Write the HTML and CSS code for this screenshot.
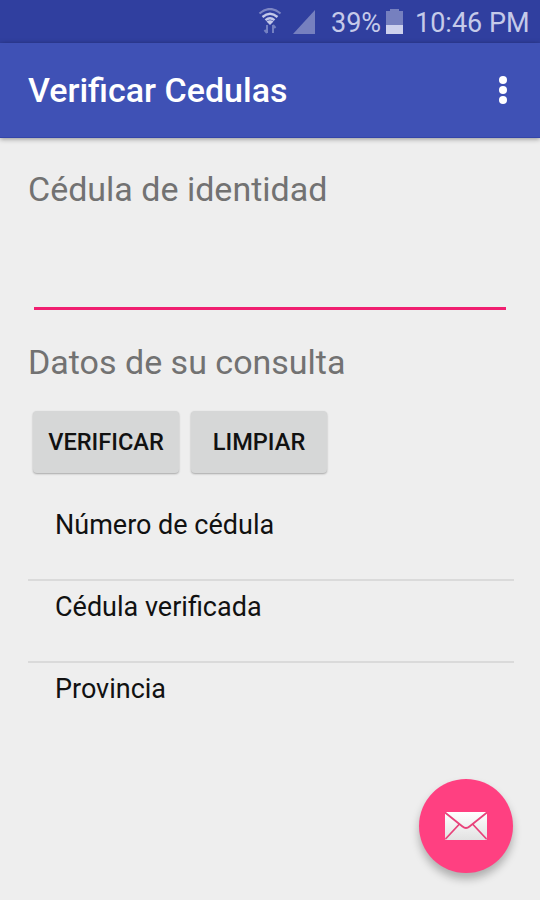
FILE: index.html
```
<!DOCTYPE html>
<html lang="es">
<head>
<meta charset="utf-8">
<title>Verificar Cedulas</title>
<link rel="stylesheet" href="styles.css">
</head>
<body>
<div class="screen">
  <div class="status">
    <svg class="wifi" width="24" height="26" viewBox="0 0 24 26" fill="none">
      <path d="M1.5 5.5Q12-3.5 22.5 5.5" stroke="#7d86c4" stroke-width="2.2"/>
      <path d="M4.5 9Q12 2.5 19.5 9M7.5 12.2Q12 8.4 16.500 12.2" stroke="#c3c8e9" stroke-width="2.4"/>
      <path d="M8.500 13.500Q12 11 15.500 13.500L12 17z" fill="#c3c8e9"/>
      <path d="M9 17v8M6.500 22l2.500 3M15 25v-8M17.500 20L15 17" stroke="#7480c2" stroke-width="2"/>
    </svg>
    <svg class="signal" width="22" height="24" viewBox="0 0 22 24"><path d="M0 24L22 0V24z" fill="#7680bf"/></svg>
    <span class="percent">39%</span>
    <svg class="battery" width="17" height="25" viewBox="0 0 17 25">
      <path d="M4 0h9v2h4v14H0V2h4z" fill="#7680bf"/>
      <path d="M0 16h17v9H0z" fill="#cdd1ed"/>
    </svg>
    <span class="clock">10:46 PM</span>
  </div>
  <header class="appbar">
    <h1 class="title">Verificar Cedulas</h1>
    <button class="more" aria-label="Más opciones"><i class="dot"></i><i class="dot"></i><i class="dot"></i></button>
  </header>
  <main class="content">
    <label class="label id-label" for="cedula">Cédula de identidad</label>
    <input class="field" id="cedula" type="text">
    <h2 class="label data-label">Datos de su consulta</h2>
    <div class="actions">
      <button class="btn verify">VERIFICAR</button>
      <button class="btn clear">LIMPIAR</button>
    </div>
    <ul class="list">
      <li class="row number">Número de cédula</li>
      <li class="row checked">Cédula verificada</li>
      <li class="row province">Provincia</li>
    </ul>
  </main>
  <button class="fab" aria-label="Enviar correo">
    <svg width="44" height="30" viewBox="0 0 44 30">
      <defs><linearGradient id="paper" x1="0" y1="0" x2="0" y2="1"><stop offset="0" stop-color="#fff"/><stop offset="1" stop-color="#e2e2e2"/></linearGradient></defs>
      <rect x="1" y="1" width="42" height="28" rx="1.500" fill="url(#paper)"/>
      <path d="M1 1.500L18.500 15.500Q22 18.500 25.500 15.500L43 1.500M1.500 28L15 13.500M42.500 28L29 13.500" fill="none" stroke="#e8437b" stroke-width="1.800"/>
    </svg>
  </button>
</div>
</body>
</html>
```
FILE: styles.css
```
* { box-sizing: border-box; }
body { margin: 0; font-family: Roboto, "Liberation Sans", sans-serif; background: #eee; }
button { font-family: inherit; border: 0; padding: 0; }
.screen { position: relative; width: 540px; height: 900px; overflow: hidden; background: #eee; display: flex; flex-direction: column; }
.status { height: 43px; flex: none; display: flex; align-items: flex-start; padding-left: 258px; background: #303f9f; color: #c5cae9; font-size: 27px; line-height: 32px; white-space: nowrap; }
.wifi { margin-top: 8px; }
.signal { margin: 10px 0 0 11px; }
.percent { margin: 7px 0 0 16px; width: 48px; }
.battery { margin: 9px 0 0 7px; }
.clock { margin: 7px 0 0 12px; }
.appbar { height: 95px; flex: none; display: flex; align-items: center; justify-content: space-between; padding: 0 30px 0 28px; background: #3f51b5; border-bottom: 1px solid #3445a8; box-shadow: 0 1px 5px rgba(0, 0, 0, .4); }
.title { margin: 0; font-size: 34px; font-weight: 500; line-height: 40px; color: #fff; white-space: nowrap; }
.more { display: flex; flex-direction: column; align-items: center; gap: 2px; width: 14px; background: none; }
.dot { width: 8px; height: 8px; border-radius: 50%; background: #fff; }
.content { display: flex; flex-direction: column; padding: 31px 26px 0 28px; }
.label { margin: 0; font-size: 34px; font-weight: 400; line-height: 40px; color: #727272; white-space: nowrap; }
.field { margin: 41px 8px 0 6px; height: 60px; padding: 0; border: 0; border-bottom: 3px solid #f01f70; background: none; outline: 0; font: inherit; font-size: 30px; }
.data-label { margin-top: 32px; }
.actions { display: flex; gap: 12px; margin: 29px 0 0 5px; }
.btn { height: 62px; border-radius: 4px; background: #d6d7d7; color: #111; font-size: 23.6px; font-weight: 500; box-shadow: 0 1px 2px rgba(0, 0, 0, .3); }
.verify { width: 146px; }
.clear { width: 136px; }
.list { list-style: none; margin: 26px 0 0; padding: 0; }
.row { height: 82px; padding: 10px 0 0 27px; font-size: 27px; line-height: 32px; color: #111; border-bottom: 2px solid #dadada; }
.province { border-bottom: 0; }
.fab { position: absolute; left: 419px; top: 779px; width: 94px; height: 94px; border-radius: 50%; background: #ff4081; display: flex; align-items: center; justify-content: center; box-shadow: 0 6px 9px rgba(0, 0, 0, .27); }
```
